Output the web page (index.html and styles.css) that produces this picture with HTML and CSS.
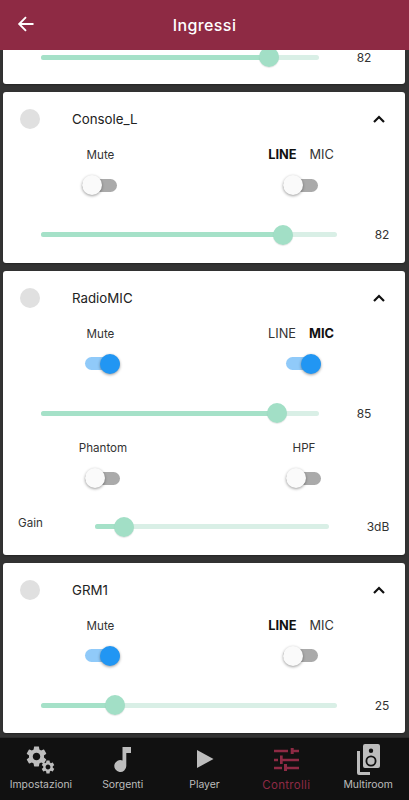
FILE: index.html
```html
<!DOCTYPE html>
<html lang="it">
<head>
<meta charset="utf-8">
<title>Ingressi</title>
<link rel="stylesheet" href="styles.css">
</head>
<body>
<svg class="defs" width="0" height="0" aria-hidden="true">
  <symbol id="gear" viewBox="0 0 24 24"><path d="M19.14 12.94c.04-.3.06-.61.06-.94 0-.32-.02-.64-.07-.94l2.03-1.58c.18-.14.23-.41.12-.61l-1.92-3.32c-.12-.22-.37-.29-.59-.22l-2.39.96c-.5-.38-1.03-.7-1.62-.94l-.36-2.54c-.04-.24-.24-.41-.48-.41h-3.84c-.24 0-.43.17-.47.41l-.36 2.54c-.59.24-1.13.57-1.62.94l-2.39-.96c-.22-.08-.47 0-.59.22L2.74 8.87c-.12.21-.08.47.12.61l2.03 1.58c-.05.3-.09.63-.09.94s.02.64.07.94l-2.03 1.58c-.18.14-.23.41-.12.61l1.92 3.32c.12.22.37.29.59.22l2.39-.96c.5.38 1.03.7 1.62.94l.36 2.54c.05.24.24.41.48.41h3.84c.24 0 .44-.17.47-.41l.36-2.54c.59-.24 1.13-.56 1.62-.94l2.39.96c.22.08.47 0 .59-.22l1.92-3.32c.12-.22.07-.47-.12-.61l-2.01-1.58zM12 15.6c-1.98 0-3.6-1.62-3.6-3.6s1.62-3.6 3.6-3.6 3.6 1.62 3.6 3.6-1.62 3.6-3.6 3.6z"/></symbol>
  <symbol id="chev" viewBox="0 0 14 10"><path d="M2 8l5-5 5 5" fill="none" stroke="#111" stroke-width="2.2"/></symbol>
</svg>
<div class="app">
  <header class="topbar">
    <svg class="back" viewBox="0 0 18 18"><path d="M16.5 9H2.5M9 2.200L2.200 9 9 15.800" fill="none" stroke="#fff" stroke-width="1.9"/></svg>
    <h1 class="title">Ingressi</h1>
  </header>
  <main class="list">
    <section class="card card-cut">
      <div class="slider-row short">
        <div class="track"><div class="fill" style="width:82%"></div><div class="thumb" style="left:82%"></div></div>
        <span class="value">82</span>
      </div>
    </section>

    <section class="card">
      <div class="head"><span class="led"></span><span class="name">Console_L</span><svg class="chev"><use href="#chev"/></svg></div>
      <div class="grid-row labels">
        <span class="label">Mute</span>
        <span class="label pair"><b>LINE</b><span>MIC</span></span>
      </div>
      <div class="grid-row toggles">
        <span class="switch"><span class="knob"></span></span>
        <span class="switch"><span class="knob"></span></span>
      </div>
      <div class="slider-row long">
        <div class="track"><div class="fill" style="width:81.8%"></div><div class="thumb" style="left:81.8%"></div></div>
        <span class="value">82</span>
      </div>
    </section>

    <section class="card">
      <div class="head"><span class="led"></span><span class="name">RadioMIC</span><svg class="chev"><use href="#chev"/></svg></div>
      <div class="grid-row labels">
        <span class="label">Mute</span>
        <span class="label pair"><span>LINE</span><b>MIC</b></span>
      </div>
      <div class="grid-row toggles shifted">
        <span class="switch on"><span class="knob"></span></span>
        <span class="switch on"><span class="knob"></span></span>
      </div>
      <div class="slider-row short">
        <div class="track"><div class="fill" style="width:85%"></div><div class="thumb" style="left:85%"></div></div>
        <span class="value">85</span>
      </div>
      <div class="grid-row labels tight">
        <span class="label">Phantom</span>
        <span class="label">HPF</span>
      </div>
      <div class="grid-row toggles shifted">
        <span class="switch"><span class="knob"></span></span>
        <span class="switch"><span class="knob"></span></span>
      </div>
      <div class="slider-row gain">
        <span class="label gain-label">Gain</span>
        <div class="track"><div class="fill" style="width:12.4%"></div><div class="thumb" style="left:12.4%"></div></div>
        <span class="value">3dB</span>
      </div>
    </section>

    <section class="card">
      <div class="head"><span class="led"></span><span class="name">GRM1</span><svg class="chev"><use href="#chev"/></svg></div>
      <div class="grid-row labels">
        <span class="label">Mute</span>
        <span class="label pair"><b>LINE</b><span>MIC</span></span>
      </div>
      <div class="grid-row toggles mixed">
        <span class="switch on"><span class="knob"></span></span>
        <span class="switch"><span class="knob"></span></span>
      </div>
      <div class="slider-row long">
        <div class="track"><div class="fill" style="width:25%"></div><div class="thumb" style="left:25%"></div></div>
        <span class="value">25</span>
      </div>
    </section>
  </main>
  <nav class="tabs">
    <a class="tab">
      <svg class="ico" viewBox="0 0 36 32"><use href="#gear" x="1" y="1" width="25" height="25"/><use href="#gear" x="17" y="16" width="16" height="16"/></svg>
      <span>Impostazioni</span>
    </a>
    <a class="tab">
      <svg class="ico" viewBox="0 0 36 32"><path d="M17.500 4H26v6h-4.700v13a6 6 0 1 1-3.800-5.600z"/></svg>
      <span>Sorgenti</span>
    </a>
    <a class="tab">
      <svg class="ico" viewBox="0 0 36 32"><path d="M11 7L27.500 16 11 25z"/></svg>
      <span>Player</span>
    </a>
    <a class="tab active">
      <svg class="ico" viewBox="0 0 36 32"><path d="M6 6.800h14v2.500H6zM25.700 6.800H31v2.500h-5.300zM22.700 5h3v6h-3zM6 15.800h4v2.500H6zM14.700 15.800H31v2.500H14.700zM12 12.500h2.700V21H12zM6 23.800h8v2.500H6zM19 23.800h12v2.500H19zM16 21h3v7h-3z"/></svg>
      <span>Controlli</span>
    </a>
    <a class="tab">
      <svg class="ico" viewBox="0 0 36 32"><path fill-rule="evenodd" d="M15 1h13a2 2 0 0 1 2 2v20a2 2 0 0 1-2 2H15a2 2 0 0 1-2-2V3a2 2 0 0 1 2-2zM21 5.500a2.200 2.200 0 1 0 0 4.400 2.200 2.200 0 0 0 0-4.400zM21 12.500a5.500 5.500 0 1 0 0 11 5.500 5.500 0 0 0 0-11zM21 14.300a3.700 3.700 0 1 1 0 7.400 3.700 3.700 0 0 1 0-7.400z"/><path d="M7 8h3v21h10v3H9a2 2 0 0 1-2-2z"/></svg>
      <span>Multiroom</span>
    </a>
  </nav>
</div>
</body>
</html>
```

FILE: styles.css
```css
* { box-sizing: border-box; }
html, body { margin: 0; padding: 0; }
body {
  background: #333;
  font-family: Inter, "Noto Sans", sans-serif;
  color: #222;
}
.defs { position: absolute; }
.app {
  display: flex;
  flex-direction: column;
  height: 800px;
  overflow: hidden;
}
.topbar {
  height: 50px;
  flex: none;
  background: #8e2a44;
  display: flex;
  align-items: center;
  justify-content: center;
  position: relative;
  z-index: 1;
}
.back {
  position: absolute;
  left: 17px;
  top: 15px;
  width: 18px;
  height: 18px;
}
.title {
  margin: 0;
  color: #fff;
  font-size: 16px;
  font-weight: 500;
  letter-spacing: .4px;
}
.list {
  flex: 1;
  min-height: 0;
  overflow: hidden;
  padding: 0 4px 0 3px;
  display: flex;
  flex-direction: column;
  gap: 8px;
}
.card {
  background: #fff;
  border-radius: 3px;
  box-shadow: 0 1px 2px rgba(0,0,0,.3);
  flex: none;
}
.card-cut {
  height: 34px;
  border-radius: 0 0 3px 3px;
}
.card-cut .slider-row { height: 14px; padding-top: 0; }
.head {
  height: 54px;
  display: flex;
  align-items: center;
  padding: 0 19px 0 17px;
}
.led {
  width: 20px;
  height: 20px;
  border-radius: 50%;
  background: #e0e0e0;
  flex: none;
}
.name {
  margin-left: 32px;
  font-size: 13.300px;
  flex: 1;
}
.chev { width: 14px; height: 10px; }
.grid-row {
  display: grid;
  justify-items: center;
  align-items: center;
}
.labels {
  height: 18px;
  grid-template-columns: 195px 206px;
}
.labels.tight {
  margin-top: -2px;
  grid-template-columns: 200px 202px;
}
.label {
  font-size: 11.600px;
  color: #333;
  white-space: nowrap;
}
.pair {
  display: flex;
  gap: 13px;
  font-size: 12.800px;
  margin-top: -1px;
}
.pair b { font-weight: 700; color: #111; }
.toggles {
  height: 42px;
  grid-template-columns: 193px 209px;
}
.toggles.shifted { grid-template-columns: 199px 203px; }
.toggles.mixed { grid-template-columns: 199px 197px; }
.switch {
  display: flex;
  width: 35px;
  height: 13px;
  border-radius: 7px;
  background: #aaa;
  position: relative;
}
.knob {
  position: absolute;
  left: 0;
  top: -3.500px;
  width: 20px;
  height: 20px;
  border-radius: 50%;
  background: #fafafa;
  box-shadow: 0 1px 3px rgba(0,0,0,.4);
}
.switch.on { background: #90caf9; }
.switch.on .knob { left: 15px; background: #2196f3; }
.slider-row {
  height: 56.500px;
  display: flex;
  align-items: center;
  padding: 1px 0 0 38px;
}
.slider-row.short { padding-right: 26px; }
.slider-row.long { padding-right: 8px; }
.slider-row.gain {
  height: 55.500px;
  padding: 0 12px 0 15px;
}
.gain-label {
  width: 77px;
  flex: none;
  padding-bottom: 8px;
}
.gain .value { margin-left: 34px; }
.track {
  flex: 1;
  height: 5px;
  border-radius: 3px;
  background: #d9efe6;
  position: relative;
}
.fill {
  height: 100%;
  border-radius: 3px;
  background: #a5e1c8;
}
.thumb {
  position: absolute;
  top: 50%;
  width: 20px;
  height: 20px;
  margin: -10px 0 0 -10px;
  border-radius: 50%;
  background: #a2dfc6;
  box-shadow: 0 1px 1px rgba(0,0,0,.1);
}
.value {
  margin-left: 30px;
  width: 30px;
  flex: none;
  text-align: center;
  font-size: 12px;
  color: #333;
}
.tabs {
  height: 63px;
  flex: none;
  background: #111;
  display: grid;
  grid-template-columns: repeat(5, 1fr);
  border-top: 1px solid #2a2a2a;
}
.tab {
  display: flex;
  flex-direction: column;
  align-items: center;
  color: #bdbdbd;
  font-size: 10.400px;
  padding-top: 5px;
}
.ico {
  width: 36px;
  height: 32px;
  fill: #bdbdbd;
  margin-bottom: 3px;
}
.tab.active {
  color: #8e2a44;
  font-size: 11.500px;
  letter-spacing: .3px;
}
.tab.active .ico { fill: #8e2a44; }
```
